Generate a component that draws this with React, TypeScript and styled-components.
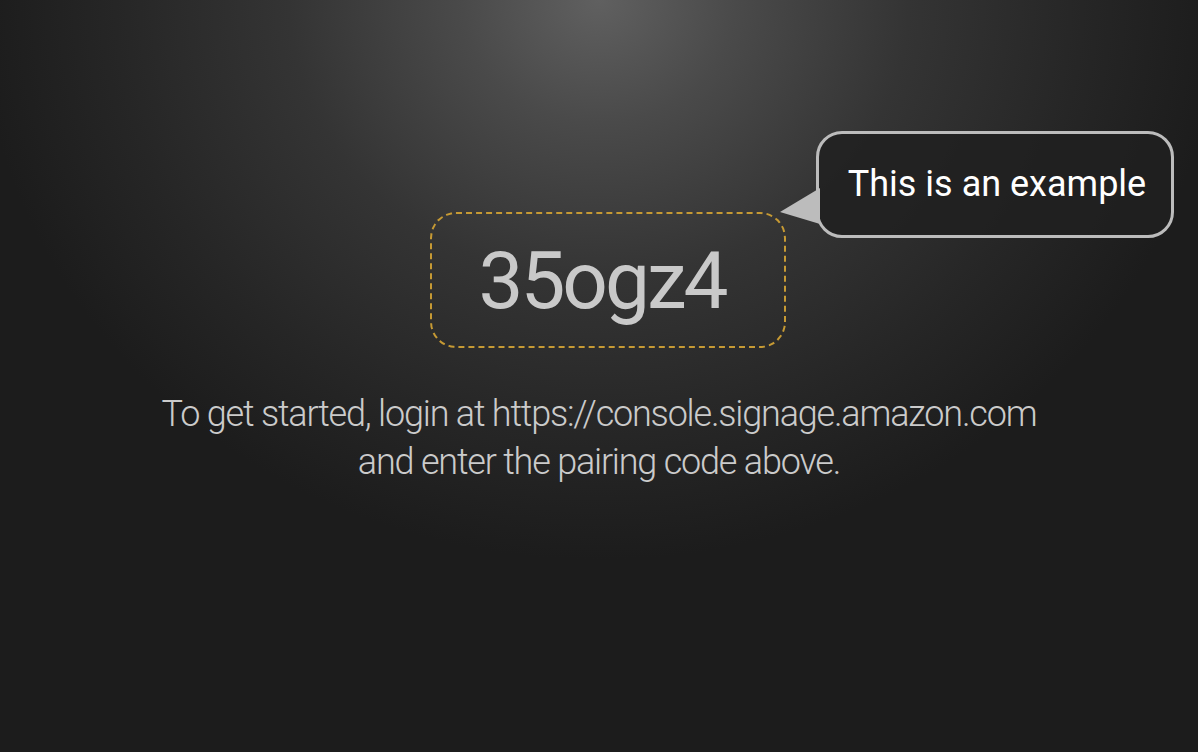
import React from 'react'
import styled, { createGlobalStyle } from 'styled-components'

export default function App() {
  return (
    <>
      <GlobalStyle />
      <Screen>
        <CodeWrap>
          <CodeBox>
            <Code>35ogz4</Code>
          </CodeBox>
          <Bubble>
            <BubbleTail viewBox="0 0 40 36" aria-hidden="true">
              <polygon points="0,24 40,0 40,36" fill="#bcbcbc" />
            </BubbleTail>
            This is an example
          </Bubble>
        </CodeWrap>

        <Instructions>
          To get started, login at https://console.signage.amazon.com
          <br />
          and enter the pairing code above.
        </Instructions>
      </Screen>
    </>
  )
}

///////////////////////////////////////////////////////////////////////////////////

const GlobalStyle = createGlobalStyle`
  html, body {
    margin: 0;
    padding: 0;
    background: #1c1c1c;
  }
  * {
    box-sizing: border-box;
  }
`

const Screen = styled.main`
  width: 1198px;
  height: 752px;
  overflow: hidden;
  display: flex;
  flex-direction: column;
  align-items: center;
  padding-top: 212px;
  font-family: Roboto, 'Noto Sans', sans-serif;
  background:
    radial-gradient(ellipse 620px 560px at 50% 0%, #606060 0%, #4a4a4a 22%, #343434 50%, #262626 78%, rgba(30, 30, 30, 0) 100%),
    #1c1c1c;
`

const CodeWrap = styled.div`
  position: relative;
  margin-left: 18px;
`

const CodeBox = styled.div`
  width: 356px;
  height: 136px;
  border: 2px dashed #c69a34;
  border-radius: 26px;
  display: flex;
  align-items: center;
  justify-content: center;
  padding-right: 12px;
`

const Code = styled.span`
  font-size: 80px;
  font-weight: 400;
  letter-spacing: -3px;
  color: #c9c9c9;
  line-height: 1;
  margin-top: 2px;
`

const Bubble = styled.div`
  position: absolute;
  left: 386px;
  top: -81px;
  width: 358px;
  height: 107px;
  border: 3px solid #bcbcbc;
  border-radius: 26px;
  background: rgba(32, 32, 32, 0.85);
  color: #ffffff;
  font-size: 36px;
  display: flex;
  align-items: center;
  justify-content: center;
  padding: 0 0 2px 4px;
`

const BubbleTail = styled.svg`
  position: absolute;
  left: -39px;
  top: 54px;
  width: 40px;
  height: 36px;
`

const Instructions = styled.p`
  margin: 42px 0 0;
  text-align: center;
  font-size: 36px;
  font-weight: 300;
  line-height: 48px;
  letter-spacing: -1.2px;
  color: #cbcbcb;
`
